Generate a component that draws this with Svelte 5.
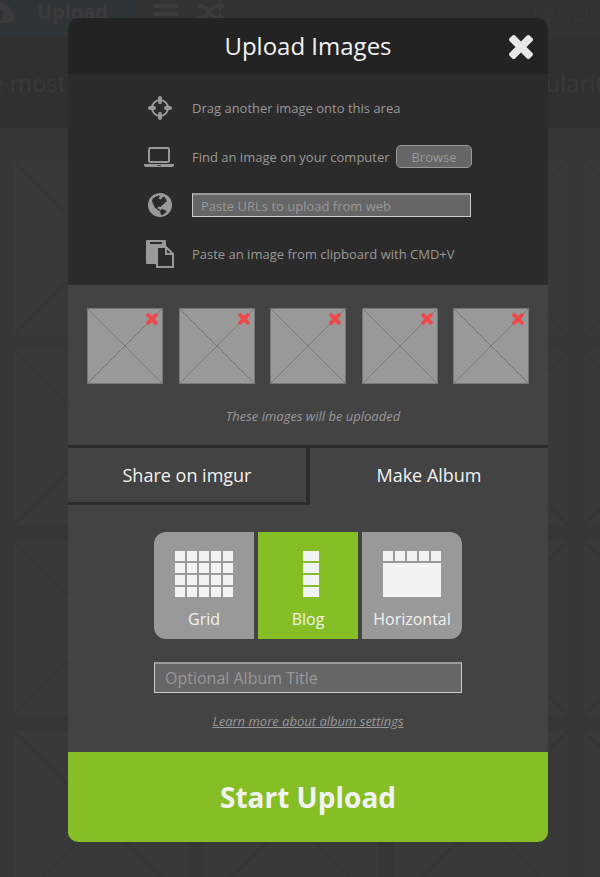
<script>
  const thumbs = [1, 2, 3, 4, 5];
  const tiles = Array.from({ length: 16 }, (_, i) => i);
  let layout = $state('blog');
  let tab = $state('album');
</script>

{#snippet cross(size)}
  <svg width={size} height={size} viewBox="302 302 1188 1188" aria-hidden="true">
    <path fill="currentColor" d="M1490 1322q0 40-28 68l-136 136q-28 28-68 28t-68-28l-294-294-294 294q-28 28-68 28t-68-28l-136-136q-28-28-28-68t28-68l294-294-294-294q-28-28-28-68t28-68l136-136q28-28 68-28t68 28l294 294 294-294q28-28 68-28t68 28l136 136q28 28 28 68t-28 68l-294 294 294 294q28 28 28 68z" transform="translate(0 -64)" />
  </svg>
{/snippet}

<div class="page">
  <div class="backdrop" aria-hidden="true">
    <div class="topbar">
      <div class="upload">
        <svg width="30" height="24" viewBox="0 0 30 24"><path fill="currentColor" fill-rule="evenodd" d="M7 23a7 7 0 0 1-3-13A9 9 0 0 1 20 5a5 5 0 0 1 5 7 6 6 0 0 1 5 5 6 6 0 0 1-6 6zM14 7l-7 8h4v5h6v-5h4z" /></svg>
        <span>Upload</span>
      </div>
      <svg class="menu" width="24" height="20" viewBox="0 0 24 20"><path fill="currentColor" d="M0 0h24v4H0zM0 8h24v4H0z" /></svg>
      <svg width="28" height="24" viewBox="0 0 28 24"><path fill="none" stroke="currentColor" stroke-width="4" d="M0 6h4c8 0 8 12 16 12h3M0 18h4c8 0 8-12 16-12h3" /><path fill="currentColor" d="M22 0l6 6-6 6zM22 12l6 6-6 6z" /></svg>
      <span class="search">Search</span>
    </div>
    <div class="heading"><span>e most</span><span>ularity</span></div>
    <div class="gallery">
      {#each tiles as tile (tile)}
        <svg class="tile" viewBox="0 0 180 180"><rect x="1" y="1" width="178" height="178" /><path d="M2 2l176 176M178 2L2 178" /></svg>
      {/each}
    </div>
  </div>

  <div class="modal" role="dialog" aria-labelledby="title">
    <header>
      <h1 id="title">Upload Images</h1>
      <button class="close" aria-label="Close">{@render cross(24)}</button>
    </header>

    <section class="sources">
      <div class="row">
        <svg width="24" height="24" viewBox="0 0 24 24"><circle cx="12" cy="12" r="8" fill="none" stroke="currentColor" stroke-width="2" /><path d="M12 2v4M12 18v4M2 12h4M18 12h4" stroke="currentColor" stroke-width="4" stroke-linecap="round" /></svg>
        <span>Drag another image onto this area</span>
      </div>
      <div class="row">
        <svg width="32" height="20" viewBox="0 0 32 20"><rect x="5" y="1" width="20" height="14" rx="1.5" fill="none" stroke="currentColor" stroke-width="2" /><path fill="currentColor" fill-rule="evenodd" d="M0 17h30v1q0 2-3 2H3q-3 0-3-2zM13 18v.7h4V18z" /></svg>
        <span>Find an image on your computer</span>
        <button class="browse">Browse</button>
      </div>
      <div class="row">
        <svg width="24" height="24" viewBox="0 0 24 24">
          <circle cx="12" cy="12" r="12" fill="currentColor" />
          <path fill="#2b2b2b" d="M4 7l1.500-2 2.500-1.500 3-1 1 1-1.500 1.500 1.500 1.500 1.500-.5 1-2 2 0 1.500 2 1 2.500-2 1-1 1.500-2.500 1.500-.5 1.500-2-.5-1.500 1 .5 1.500 1.500-.3 0 1.500 1.500 1.300 1 0-.5.5-2-.8-2.500-2-2-1.500-1.500-3-1-2z" />
          <path fill="#2b2b2b" d="M13 16.500l1.500-.5 2 1 2 1-.5 1.500-1.500 1-2 1.500-1.500.3-.3-2-.7-1.800z" />
        </svg>
        <input class="url" type="text" placeholder="Paste URLs to upload from web" aria-label="Image URLs" />
      </div>
      <div class="row">
        <svg width="28" height="28" viewBox="0 0 28 28"><path fill="currentColor" fill-rule="evenodd" d="M1 0h18q1 0 1 1v5h-8q-2 0-2 2v16H1q-1 0-1-1V1q0-1 1-1zM4 2v2h12V2z" /><path fill="none" stroke="currentColor" stroke-width="2" d="M11 7h9l7 7v13H11zM20 7v7h7" /></svg>
        <span>Paste an image from clipboard with CMD+V</span>
      </div>
    </section>

    <section class="queue">
      <div class="thumbs">
        {#each thumbs as n (n)}
          <div class="thumb">
            <svg width="76" height="76" viewBox="0 0 76 76" aria-hidden="true"><rect x=".5" y=".5" width="75" height="75" fill="#999" stroke="#777" /><path d="M1 1l74 74M75 1L1 75" stroke="#777" /></svg>
            <button aria-label="Remove image {n}">{@render cross(12)}</button>
          </div>
        {/each}
      </div>
      <p>These images will be uploaded</p>
    </section>

    <div class="tabs" role="tablist">
      <button role="tab" aria-selected={tab === 'share'} onclick={() => (tab = 'share')}>Share on imgur</button>
      <button role="tab" aria-selected={tab === 'album'} onclick={() => (tab = 'album')}>Make Album</button>
    </div>

    <section class="album">
      <div class="layouts">
        <button class:active={layout === 'grid'} onclick={() => (layout = 'grid')}>
          <svg width="58" height="46" viewBox="0 0 58 46">
            {#each [0, 12, 24, 36] as y}{#each [0, 12, 24, 36, 48] as x}<rect {x} {y} width="10" height="10" />{/each}{/each}
          </svg>
          Grid
        </button>
        <button class:active={layout === 'blog'} onclick={() => (layout = 'blog')}>
          <svg width="58" height="46" viewBox="0 0 58 46">
            {#each [0, 12, 24, 36] as y}<rect x="24" {y} width="16" height="10" />{/each}
          </svg>
          Blog
        </button>
        <button class:active={layout === 'horizontal'} onclick={() => (layout = 'horizontal')}>
          <svg width="58" height="46" viewBox="0 0 58 46">
            {#each [0, 12, 24, 36, 48] as x}<rect {x} width="10" height="10" />{/each}<rect y="12" width="58" height="34" />
          </svg>
          Horizontal
        </button>
      </div>
      <input class="name" type="text" placeholder="Optional Album Title" aria-label="Album title" />
      <a href="#settings">Learn more about album settings</a>
    </section>

    <button class="start">Start Upload</button>
  </div>
</div>

<style>
  :global(body) { background: #363636; }
  .page, .page * { box-sizing: border-box; }
  .page {
    position: relative;
    overflow: hidden;
    min-height: 100vh;
    padding: 18px 16px 35px 32px;
    font-family: "Open Sans", "Noto Sans", sans-serif;
  }
  button, input { margin: 0; padding: 0; border: 0; font-family: inherit; color: inherit; background: none; }
  button { cursor: pointer; }
  svg { display: block; flex: none; }

  .backdrop { position: absolute; inset: 0; overflow: hidden; color: #3b3b3b; }
  .topbar { display: flex; align-items: flex-start; height: 37px; background: #323232; }
  .upload { display: flex; width: 133px; height: 37px; background: #2f3437; font-size: 20px; line-height: 24px; font-weight: 700; }
  .upload svg { margin-left: -15px; margin-right: 22px; }
  .menu { margin: 4px 20px 0; }
  .search { margin-left: auto; padding-right: 4px; color: #363636; font-size: 20px; line-height: 27px; }
  .heading { display: flex; justify-content: space-between; height: 91px; background: #303030; color: #393939; font-size: 24px; line-height: 92px; white-space: nowrap; }
  .heading span:first-child { margin-left: -10px; }
  .heading span:last-child { margin-right: -16px; }
  .gallery { display: grid; grid-template-columns: repeat(4, 180px); gap: 10px; padding: 30px 11px; }
  .tile { width: 180px; height: 180px; fill: #393939; stroke: #363636; stroke-width: 3; }

  .modal { position: relative; max-width: 480px; margin: 0 auto; border-radius: 10px; overflow: hidden; background: #434343; color: #999; }
  header { position: relative; height: 56px; background: #232323; color: #f2f2f2; text-align: center; }
  h1 { margin: 0; font-size: 24px; line-height: 56px; font-weight: 400; }
  .close { position: absolute; top: 17px; right: 15px; color: #e8e8e8; }

  .sources { display: flex; flex-direction: column; height: 211px; padding: 10px 76px 7px; background: #2b2b2b; font-size: 13px; line-height: 18px; }
  .row { display: flex; align-items: center; flex: 1; white-space: nowrap; }
  .row > svg { width: 32px; margin-right: 16px; }
  .browse { width: 76px; height: 23px; margin-left: auto; border: 1px solid #999; border-radius: 5px; background: #666; color: #999; font-size: 13px; line-height: 18px; }
  input::placeholder { color: #999; opacity: 1; }
  input { border: 1px solid #ccc; border-top: 2px solid #999; background: #666; color: #f2f2f2; }
  .url { width: 279px; height: 24px; padding: 0 8px; font-size: 13px; }

  .queue { padding: 23px 19px 18px; }
  .thumbs { display: flex; justify-content: space-between; }
  .thumb { position: relative; }
  .thumb button { position: absolute; top: 5px; right: 5px; color: #f04848; }
  .queue p { margin: 22px 0 0; padding-left: 10px; font-size: 13px; line-height: 21px; font-style: italic; text-align: center; }

  .tabs { display: flex; border-top: 3px solid #2b2b2b; }
  .tabs button { flex: 1; height: 57px; padding-bottom: 3px; font-size: 18px; color: #f2f2f2; border: 0 solid #2b2b2b; }
  .tabs button[aria-selected="false"] { flex: 0 0 242px; border-width: 0 4px 3px 0; padding-bottom: 0; }

  .album { display: flex; flex-direction: column; align-items: center; padding: 27px 0 20px; }
  .layouts { display: flex; gap: 4px; border-radius: 12px; overflow: hidden; }
  .layouts button { display: flex; flex-direction: column; align-items: center; width: 100px; height: 107px; padding-top: 19px; background: #999; color: #f2f2f2; font-size: 16px; line-height: 24px; }
  .layouts button.active { background: #85bf25; }
  .layouts svg { margin-bottom: 10px; fill: #f2f2f2; }
  .name { width: 308px; height: 31px; margin: 23px 0 18px; padding: 0 10px; font-size: 16px; }
  .album a { color: #999; font-size: 13px; line-height: 21px; font-style: italic; text-decoration: underline; }

  .start { display: block; width: 100%; height: 90px; background: #85bf25; color: #f2f2f2; font-size: 28px; font-weight: 700; }
</style>
